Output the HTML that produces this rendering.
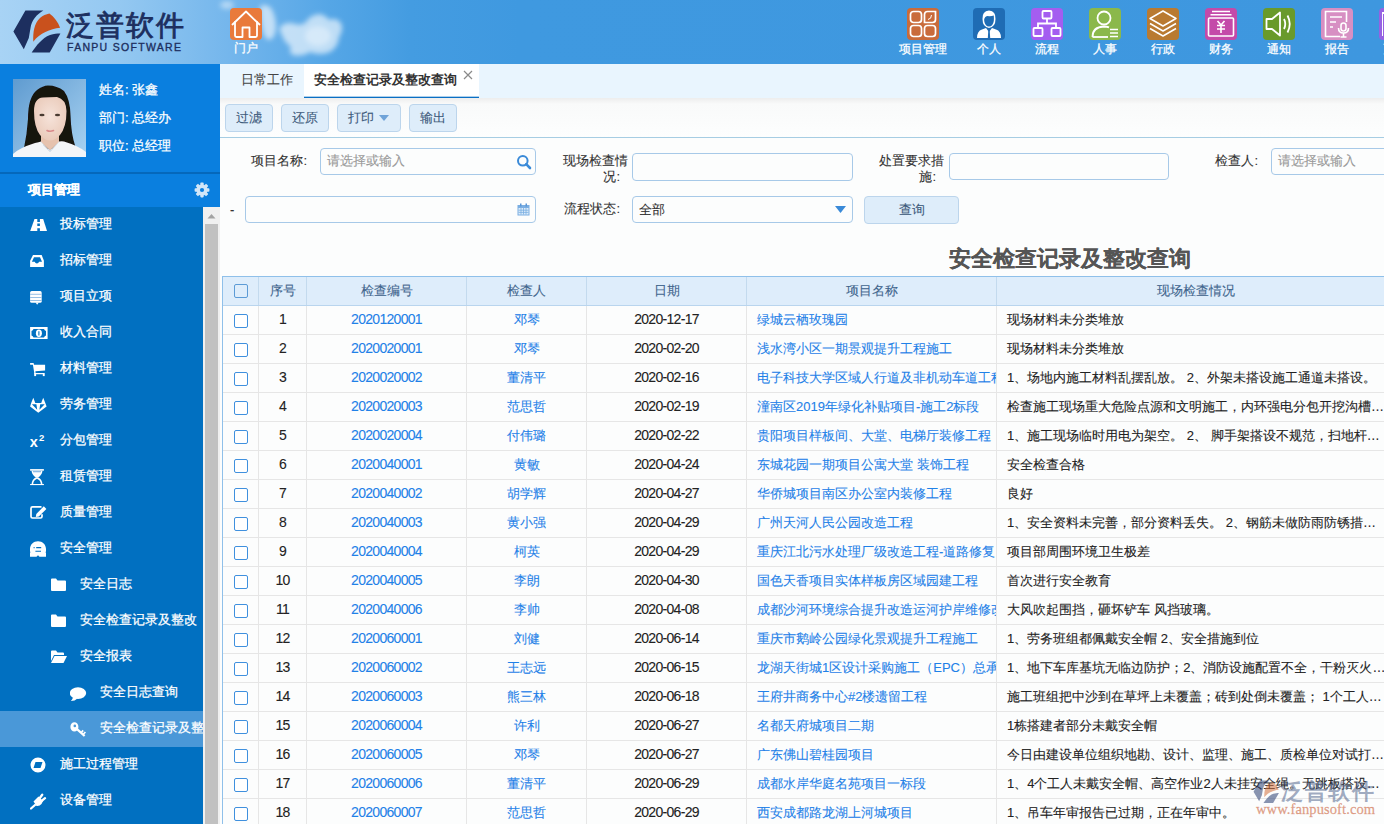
<!DOCTYPE html>
<html><head><meta charset="utf-8">
<style>
*{box-sizing:border-box}
html,body{margin:0;padding:0;width:1384px;height:824px;overflow:hidden;font-family:"Liberation Sans",sans-serif;font-size:13px;color:#333;background:#fff;-webkit-text-stroke-width:0.1px}
#header,#sidebar{-webkit-text-stroke-width:0.25px}
.abs{position:absolute}
#header{position:absolute;left:0;top:0;width:1384px;height:64px;background:linear-gradient(to right,#a8d3f5 0px,#94c8f1 120px,#74b6ec 230px,#55a6e6 330px,#449ce1 410px,#3f99e0 520px,#3e97df 1384px);overflow:hidden}
.hicon{position:absolute;top:8px;width:32px;height:32px;border-radius:4px}
.hicon svg{position:absolute;left:0;top:0}
.hlabel{position:absolute;top:41px;width:80px;text-align:center;color:#fff;font-size:12px;line-height:16px;white-space:nowrap;font-weight:500}
#sidebar{position:absolute;left:0;top:64px;width:220px;height:760px;background:#0170c1;overflow:hidden}
#main{position:absolute;left:220px;top:64px;width:1164px;height:760px;background:#fcfdfd;overflow:hidden}
.btn{background:#deedfa;border:1px solid #bcd5ec;border-radius:4px;text-align:center;line-height:26px;color:#3d5a7a;white-space:nowrap}
.lab{color:#333;text-align:right;white-space:nowrap}
.inp{background:transparent;border:1px solid #a7c9e8;border-radius:4px}
.ph{position:absolute;left:6px;top:4px;line-height:16px;color:#999;white-space:nowrap}
.th{height:28px;line-height:27px;text-align:center;color:#41658d;white-space:nowrap}
.td{height:28px;line-height:27px;text-align:center;color:#222;white-space:nowrap;overflow:hidden}
.td.lnk{color:#1f81e8}
.td.num{font-size:14px;letter-spacing:-0.7px}
.td.tl{text-align:left;padding-left:10px}
.td.ell{text-overflow:ellipsis}
.cb{width:14px;height:14px;border:1.5px solid #3f90de;border-radius:2px;background:#fff}
.cbh{border-color:#5c9bd6;background:transparent}
</style></head>
<body>
<div id="header">
  <svg class="abs" style="left:0;top:0" width="200" height="64" viewBox="0 0 200 64">
    <path d="M25.4,10.4 L43.4,10.4 C37,14 31.5,20 30.5,28 L28.8,38 L23.8,49.2 L13.4,31.6 Z" fill="#1d2f5f"/>
    <path d="M33.3,41.7 C33,32 34,24 40,18 C43,15.5 46,14.5 49.4,13.6 C54,17 58,22 60.1,27.8 C50,29 40,33 33.3,41.7 Z" fill="#c9511d"/>
    <path d="M31.7,52.4 C36,46 42,38 50,35 C54,33.8 57,33.5 60.4,33.5 L49.7,52.4 Z" fill="#1d2f5f"/>
  </svg>
  <div class="abs" style="left:66px;top:9px;font-size:28px;line-height:34px;color:#1d2f5f;letter-spacing:2px;-webkit-text-stroke:0.9px #1d2f5f;white-space:nowrap">泛普软件</div>
  <div class="abs" style="left:67px;top:41px;font-size:10.5px;line-height:12px;color:#1d2f5f;letter-spacing:1.3px;-webkit-text-stroke:0.35px #1d2f5f;white-space:nowrap">FANPU SOFTWARE</div>
  <!-- clouds -->
  <svg class="abs" style="left:200px;top:0" width="180" height="64" viewBox="0 0 180 64">
    <defs><filter id="bl" x="-50%" y="-50%" width="200%" height="200%"><feGaussianBlur stdDeviation="2.4"/></filter></defs>
    <g fill="#fff" filter="url(#bl)">
      <ellipse cx="27" cy="5" rx="7" ry="4" opacity=".45"/>
      <path d="M60,6 Q66,3 71,8 Q76,16 76,28 Q75,40 68,40 Q63,36 62,26 Q60,15 60,6 Z" opacity=".6"/>
      <path d="M80,27 Q86,21 95,24 Q102,26 106,22 Q110,15 119,14 Q126,15 129,20 Q136,17 141,23 Q144,30 139,37 Q139,46 130,52 Q120,56 110,52 Q102,57 93,55 Q88,52 91,47 Q84,42 82,35 Q79,31 80,27 Z" opacity=".62"/>
      <ellipse cx="118" cy="36" rx="13" ry="10" opacity=".35"/>
    </g>
  </svg>
  <div class="hicon" style="left:230px;background:#e97a3b">
    <svg width="32" height="32" viewBox="0 0 32 32" fill="none" stroke="#fff" stroke-width="1.8" stroke-linejoin="round" stroke-linecap="round">
      <path d="M2.5,16.5 L16,3.5 L29.5,16.5"/>
      <path d="M5,14 L5,27.5 Q5,29 6.5,29 L12.5,29 L12.5,19.5 L19.5,19.5 L19.5,29 L25.5,29 Q27,29 27,27.5 L27,14"/>
    </svg>
  </div>
  <div class="hlabel" style="left:206px;top:40px">门户</div>
  <!-- right icons -->
  <div class="hicon" style="left:907px;background:#c96b3b">
    <svg width="32" height="32" viewBox="0 0 32 32" fill="none" stroke="#fff" stroke-width="1.7">
      <rect x="3.5" y="3.5" width="11" height="11" rx="3"/>
      <path d="M17.5,6.5 Q17.5,3.5 20.5,3.5 L28.5,3.5 L28.5,11.5 Q28.5,14.5 25.5,14.5 L17.5,14.5 Z"/>
      <path d="M24.5,7 Q24.5,11 21,11.5" stroke-width="1"/>
      <rect x="3.5" y="17.5" width="11" height="11" rx="3"/>
      <rect x="17.5" y="17.5" width="11" height="11" rx="3"/>
    </svg>
  </div>
  <div class="hlabel" style="left:883px">项目管理</div>
  <div class="hicon" style="left:973px;background:#1f6cb4">
    <svg width="32" height="32" viewBox="0 0 32 32">
      <path d="M4,30 Q4,23 9,21.5 L13,20 L16,24 L19,20 L23,21.5 Q28,23 28,30 Z" fill="#fff"/>
      <path d="M15.3,22 L16.7,22 L17.2,30 L14.8,30 Z" fill="#1f6cb4"/>
      <path d="M9.5,11 Q9,3 16,2.5 Q23,3 22.5,11 Q22.5,19 16,20 Q9.5,19 9.5,11 Z" fill="#fff"/>
      <path d="M11.2,11 Q12,8.5 14,8 Q18,8.5 20.8,7.5 Q21,11 20.8,13 Q20,18.3 16,18.6 Q12,18.3 11.2,13 Z" fill="#1f6cb4"/>
    </svg>
  </div>
  <div class="hlabel" style="left:949px">个人</div>
  <div class="hicon" style="left:1031px;background:#a45df0">
    <svg width="32" height="32" viewBox="0 0 32 32" fill="none" stroke="#fff" stroke-width="1.8">
      <rect x="11.5" y="3" width="9" height="7.5" rx="1"/>
      <path d="M16,10.5 L16,15.5 M7,20 L7,15.5 L25,15.5 L25,20"/>
      <rect x="2.5" y="20" width="9" height="8" rx="1"/>
      <rect x="20.5" y="20" width="9" height="8" rx="1"/>
    </svg>
  </div>
  <div class="hlabel" style="left:1007px">流程</div>
  <div class="hicon" style="left:1089px;background:#8bb84b">
    <svg width="32" height="32" viewBox="0 0 32 32" fill="none" stroke="#fff" stroke-width="1.8">
      <circle cx="15" cy="10" r="6.5"/>
      <path d="M3.5,29 Q3.5,19 15,18.5 Q18,18.5 20,19.3"/>
      <path d="M3.5,29 L19,29"/>
      <path d="M21,21.5 L29,21.5 M21,25 L29,25 M21,28.5 L29,28.5" stroke-width="1.7"/>
    </svg>
  </div>
  <div class="hlabel" style="left:1065px">人事</div>
  <div class="hicon" style="left:1147px;background:#b97a31">
    <svg width="32" height="32" viewBox="0 0 32 32" fill="none" stroke="#fff" stroke-width="1.5" stroke-linejoin="round">
      <path d="M16,3 L29,10.5 L16,18 L3,10.5 Z"/>
      <path d="M3,15.5 L16,23 L29,15.5"/>
      <path d="M3,20.5 L16,28 L29,20.5"/>
    </svg>
  </div>
  <div class="hlabel" style="left:1123px">行政</div>
  <div class="hicon" style="left:1205px;background:#c44aa9">
    <svg width="32" height="32" viewBox="0 0 32 32" fill="none" stroke="#fff" stroke-width="1.6">
      <path d="M7,3.5 L25,3.5 M5.5,6.8 L26.5,6.8"/>
      <rect x="3.5" y="10" width="25" height="18" rx="1"/>
      <path d="M12.5,13 L16,17 L19.5,13 M16,17 L16,25 M12,17.5 L20,17.5 M12,21 L20,21"/>
    </svg>
  </div>
  <div class="hlabel" style="left:1181px">财务</div>
  <div class="hicon" style="left:1263px;background:#699a2b">
    <svg width="32" height="32" viewBox="0 0 32 32" fill="none" stroke="#fff" stroke-width="1.8" stroke-linejoin="round">
      <path d="M3.5,11 L9,11 L17,4.5 L17,27.5 L9,21 L3.5,21 Z"/>
      <path d="M21,11 Q23.5,16 21,21"/>
      <path d="M24.5,7.5 Q29,16 24.5,24.5"/>
    </svg>
  </div>
  <div class="hlabel" style="left:1239px">通知</div>
  <div class="hicon" style="left:1321px;background:#d78fc3">
    <svg width="32" height="32" viewBox="0 0 32 32" fill="none" stroke="#fff" stroke-width="1.6">
      <path d="M19,28.5 L4.5,28.5 L4.5,3.5 L25.5,3.5 L25.5,14"/>
      <path d="M9,9 L21,9 M9,14 L15,14 M9,19 L12,19"/>
      <rect x="20" y="15" width="5" height="8" rx="2.5"/>
      <path d="M17.5,20 Q17.5,25 22.5,25 Q27.5,25 27.5,20 M22.5,25 L22.5,29 M19.5,29 L25.5,29"/>
    </svg>
  </div>
  <div class="hlabel" style="left:1297px">报告</div>
  <div class="hicon" style="left:1379px;background:#9662e2"><div class="abs" style="left:2.5px;top:4px;width:1.7px;height:24px;background:#fff"></div><div class="abs" style="left:2.5px;top:4px;width:10px;height:1.7px;background:#fff"></div></div>
  <div class="hlabel" style="left:1355px">更多</div>
</div>
<div id="sidebar">
  <div class="abs" style="left:0;top:0;width:220px;height:108px;background:#0a7fdf"></div>
  <!-- photo -->
  <svg class="abs" style="left:13px;top:15px" width="73" height="78" viewBox="0 0 73 78">
    <defs>
      <linearGradient id="pbg" x1="0" y1="0" x2="1" y2="1"><stop offset="0" stop-color="#5f9bd0"/><stop offset="1" stop-color="#a9d3f2"/></linearGradient>
      <radialGradient id="face" cx="0.5" cy="0.45" r="0.6"><stop offset="0" stop-color="#f6e3da"/><stop offset="1" stop-color="#e9c9b8"/></radialGradient>
      <filter id="pb" x="-10%" y="-10%" width="120%" height="120%"><feGaussianBlur stdDeviation="0.5"/></filter>
    </defs>
    <rect width="73" height="78" fill="url(#pbg)"/>
    <g filter="url(#pb)">
    <path d="M11,69 Q14,55 15,40 Q15,18 24,11 Q30,6.5 35,6.5 Q44,6.5 51,12 Q57,20 57.5,36 Q58,55 62.5,68 Q50,70 36,70 Q22,70 11,69 Z" fill="#17120f"/>
    <path d="M28,52 L46,52 L46,63 L37,71.5 L28,63 Z" fill="#e6c2ae"/>
    <path d="M21,32 Q21,19 30,18.5 Q36,18 44,18 Q53,20 53.5,32 Q53.5,48 47,56 Q42,61.5 37,61.5 Q32,61.5 27,56 Q21,48 21,32 Z" fill="url(#face)"/>
    <path d="M0,78 L0,75 Q6,69 22,64 Q26,63 28,62.5 L37,72 L46,62.5 Q49,62 51,62.5 Q66,67 73,73 L73,78 Z" fill="#f3f5f8"/>
    <path d="M30,66 L37,73 L44,65" fill="none" stroke="#d5dbe2" stroke-width="0.8"/>
    <ellipse cx="29" cy="36" rx="2.6" ry="1.2" fill="#4a3a30"/>
    <ellipse cx="44.5" cy="36" rx="2.6" ry="1.2" fill="#4a3a30"/>
    <path d="M34,51.5 Q37,53 40.5,51.5" fill="none" stroke="#d9898b" stroke-width="1.6" stroke-linecap="round"/>
    </g>
  </svg>
  <div class="abs" style="left:99px;top:18px;color:#fff;font-size:13px;line-height:16px;white-space:nowrap">姓名: 张鑫</div>
  <div class="abs" style="left:99px;top:46px;color:#fff;font-size:13px;line-height:16px;white-space:nowrap">部门: 总经办</div>
  <div class="abs" style="left:99px;top:74px;color:#fff;font-size:13px;line-height:16px;white-space:nowrap">职位: 总经理</div>
  <div class="abs" style="left:0;top:108px;width:220px;height:2px;background:#0568bb"></div>
  <div class="abs" style="left:0;top:110px;width:220px;height:33px;background:#0a7fdf"></div>
  <div class="abs" style="left:28px;top:117px;color:#fff;font-size:13px;font-weight:bold;line-height:17px;white-space:nowrap">项目管理</div>
  <svg class="abs" style="left:194px;top:118px" width="16" height="16" viewBox="0 0 16 16"><g fill="#d2e6f8"><rect x="6.3" y="0.6" width="3.4" height="4" rx="0.8" transform="rotate(0 8 8)"/><rect x="6.3" y="0.6" width="3.4" height="4" rx="0.8" transform="rotate(45 8 8)"/><rect x="6.3" y="0.6" width="3.4" height="4" rx="0.8" transform="rotate(90 8 8)"/><rect x="6.3" y="0.6" width="3.4" height="4" rx="0.8" transform="rotate(135 8 8)"/><rect x="6.3" y="0.6" width="3.4" height="4" rx="0.8" transform="rotate(180 8 8)"/><rect x="6.3" y="0.6" width="3.4" height="4" rx="0.8" transform="rotate(225 8 8)"/><rect x="6.3" y="0.6" width="3.4" height="4" rx="0.8" transform="rotate(270 8 8)"/><rect x="6.3" y="0.6" width="3.4" height="4" rx="0.8" transform="rotate(315 8 8)"/><circle cx="8" cy="8" r="5.6"/></g><circle cx="8" cy="8" r="2.1" fill="#0a7fdf"/></svg>
  <!-- menu -->
  <div class="abs" style="left:0;top:143px;width:220px;height:617px;background:#0170c1"></div>
  <div class="abs" style="left:0;top:647px;width:203px;height:36px;background:#4a98d8"></div>
  <div class="abs" style="left:60px;top:142px;line-height:36px;color:#fff;font-size:13px;white-space:nowrap">投标管理</div>
  <svg class="abs" style="left:30px;top:153px" width="18" height="17" viewBox="0 0 18 17"><path d="M4.5,2.1 L13.2,2.1 L17,14 L0.2,14 Z" fill="#fff"/><path d="M7.3,2.1 L9.9,2.1 L9.9,5 L7.3,5 Z M7.3,6.6 L9.9,6.6 L9.9,9 L7.3,9 Z M7.3,11.2 L9.9,11.2 L9.9,14 L7.3,14 Z" fill="#0170c1"/></svg>
  <div class="abs" style="left:60px;top:178px;line-height:36px;color:#fff;font-size:13px;white-space:nowrap">招标管理</div>
  <svg class="abs" style="left:30px;top:189px" width="18" height="17" viewBox="0 0 18 17"><path d="M3,2.1 L11.7,2.1 L13.9,7.8 L13.9,14 L0.1,14 L0.1,7.8 Z" fill="#fff"/><path d="M4,4.2 L10,4.2 L12,8.7 L9.1,8.7 Q8.5,10.5 6.9,10.5 Q5.3,10.5 4.7,8.7 L1.9,8.7 Z" fill="#0170c1"/></svg>
  <div class="abs" style="left:60px;top:214px;line-height:36px;color:#fff;font-size:13px;white-space:nowrap">项目立项</div>
  <svg class="abs" style="left:30px;top:225px" width="18" height="17" viewBox="0 0 18 17"><rect x="0.1" y="2.1" width="11.6" height="11.7" rx="1.6" fill="#fff"/><path d="M5.6,13.5 L7.1,15.8 L8.8,13.5 Z" fill="#fff"/><path d="M0.1,5.3 L11.7,5.3 M0.1,8.5 L11.7,8.5 M0.1,11.5 L11.7,11.5" stroke="#8db9e2" stroke-width="0.9"/></svg>
  <div class="abs" style="left:60px;top:250px;line-height:36px;color:#fff;font-size:13px;white-space:nowrap">收入合同</div>
  <svg class="abs" style="left:30px;top:261px" width="18" height="17" viewBox="0 0 18 17"><rect x="0.1" y="2" width="17.5" height="12" fill="#fff"/><path d="M3.5,4 L14,4 Q14.5,5.6 16,6 L16,10.5 Q14.5,11 14,12.5 L3.5,12.5 Q3,11 1.5,10.5 L1.5,6 Q3,5.6 3.5,4 Z" fill="#0170c1"/><ellipse cx="8.9" cy="8.3" rx="3" ry="3.7" fill="#fff"/><path d="M8.9,6.3 L8.9,10.5" stroke="#0170c1" stroke-width="1.1"/></svg>
  <div class="abs" style="left:60px;top:286px;line-height:36px;color:#fff;font-size:13px;white-space:nowrap">材料管理</div>
  <svg class="abs" style="left:30px;top:297px" width="18" height="17" viewBox="0 0 18 17"><path d="M0.1,2.1 L3.6,2.1 L4,3.7 L15.1,3.7 L15.1,9.6 L5.4,10.3 L5.6,11.9 L13.8,11.9 L13.8,13.2 L4.5,13.2 L2.9,3.7 L0.1,3.7 Z" fill="#fff"/><rect x="4.2" y="12" width="1.9" height="3.1" fill="#fff"/><rect x="12.8" y="12" width="1.9" height="3.1" fill="#fff"/></svg>
  <div class="abs" style="left:60px;top:322px;line-height:36px;color:#fff;font-size:13px;white-space:nowrap">劳务管理</div>
  <svg class="abs" style="left:30px;top:333px" width="18" height="17" viewBox="0 0 18 17"><path d="M3.3,0.8 L5.3,6.1 L11.2,6.1 L13.2,0.8 L15.3,6.1 L16.6,9.6 L8.3,15.8 L0.1,9.6 L1.2,6.1 Z" fill="#fff"/><path d="M1.9,7.2 L6.4,7.2 L7.2,12.8 Z M10.2,7.2 L14.7,7.2 L9.4,12.8 Z" fill="#0170c1"/></svg>
  <div class="abs" style="left:60px;top:358px;line-height:36px;color:#fff;font-size:13px;white-space:nowrap">分包管理</div>
  <svg class="abs" style="left:30px;top:369px" width="18" height="17" viewBox="0 0 18 17"><text x="-0.2" y="13.8" font-family="Liberation Sans" font-weight="bold" font-size="14.5" fill="#fff">x</text><text x="8.9" y="8.1" font-family="Liberation Sans" font-weight="bold" font-size="9.5" fill="#fff">2</text></svg>
  <div class="abs" style="left:60px;top:394px;line-height:36px;color:#fff;font-size:13px;white-space:nowrap">租赁管理</div>
  <svg class="abs" style="left:30px;top:405px" width="18" height="17" viewBox="0 0 18 17"><rect x="0.1" y="0.1" width="13.8" height="1.6" fill="#fff"/><rect x="0.1" y="15" width="13.8" height="1.1" fill="#fff"/><path d="M1.5,1.7 L12.5,1.7 Q12,6 8,8.4 L6,8.4 Q2,6 1.5,1.7 Z" fill="#fff"/><rect x="3" y="2" width="8" height="1.3" fill="#8fbce6"/><path d="M6,8.2 Q1.8,10.5 1.6,15 L12.4,15 Q12.2,10.5 8,8.2 Z" fill="#fff"/><path d="M7,9.7 Q3.4,11.2 3.2,15 L10.8,15 Q10.6,11.2 7,9.7 Z" fill="#0170c1"/></svg>
  <div class="abs" style="left:60px;top:430px;line-height:36px;color:#fff;font-size:13px;white-space:nowrap">质量管理</div>
  <svg class="abs" style="left:30px;top:441px" width="18" height="17" viewBox="0 0 18 17"><path d="M11.5,1.9 L2.5,1.9 Q1,1.9 1,3.5 L1,11.5 Q1,13 2.5,13 L10.5,13 Q12,13 12,11.5 L12,9.3" fill="none" stroke="#fff" stroke-width="1.7"/><path d="M5.8,12 L6.3,9 L13.8,1.3 L16.4,3.9 L8.8,11.5 Z" fill="#fff"/></svg>
  <div class="abs" style="left:60px;top:466px;line-height:36px;color:#fff;font-size:13px;white-space:nowrap">安全管理</div>
  <svg class="abs" style="left:30px;top:477px" width="18" height="17" viewBox="0 0 18 17"><path d="M8,0.2 C12.5,0.2 16,3.5 16,8 L16,10.3 Q15.2,11.2 16,12 L16,15.8 L9.5,15.8 L8,14.2 L6.5,15.8 L0,15.8 L0,12 Q0.8,11.2 0,10.3 L0,8 C0,3.5 3.5,0.2 8,0.2 Z" fill="#fff"/><path d="M3.6,6.1 L4.6,6.1 L4.6,7.3 L3.6,7.3 Z M6.2,6.1 L11.2,6.1 L11.2,7.3 L6.2,7.3 Z M5.4,9.8 L11,9.8 L11,10.8 L5.4,10.8 Z" fill="#0170c1"/></svg>
  <div class="abs" style="left:80px;top:502px;line-height:36px;color:#fff;font-size:13px;white-space:nowrap">安全日志</div>
  <svg class="abs" style="left:50px;top:513px" width="18" height="17" viewBox="0 0 18 17"><path d="M1,2.5 Q1,1.5 2,1.5 L6,1.5 L7.5,3.5 L15,3.5 Q16,3.5 16,4.5 L16,13 Q16,14 15,14 L2,14 Q1,14 1,13 Z" fill="#fff"/></svg>
  <div class="abs" style="left:80px;top:538px;line-height:36px;color:#fff;font-size:13px;white-space:nowrap">安全检查记录及整改</div>
  <svg class="abs" style="left:50px;top:549px" width="18" height="17" viewBox="0 0 18 17"><path d="M1,2.5 Q1,1.5 2,1.5 L6,1.5 L7.5,3.5 L15,3.5 Q16,3.5 16,4.5 L16,13 Q16,14 15,14 L2,14 Q1,14 1,13 Z" fill="#fff"/></svg>
  <div class="abs" style="left:80px;top:574px;line-height:36px;color:#fff;font-size:13px;white-space:nowrap">安全报表</div>
  <svg class="abs" style="left:50px;top:585px" width="18" height="17" viewBox="0 0 18 17"><path d="M1,2.5 Q1,1.5 2,1.5 L6,1.5 L7.5,3.5 L13,3.5 Q14,3.5 14,4.5 L14,6 L4,6 L1,12 Z" fill="#fff"/><path d="M4.5,7 L17,7 L13.5,14 L1,14 Z" fill="#fff"/></svg>
  <div class="abs" style="left:100px;top:610px;line-height:36px;color:#fff;font-size:13px;white-space:nowrap">安全日志查询</div>
  <svg class="abs" style="left:70px;top:621px" width="18" height="17" viewBox="0 0 18 17"><ellipse cx="8" cy="8.1" rx="8.2" ry="5.8" fill="#fff"/><path d="M3,12 Q2.6,14.8 0.9,16.1 Q5,16 7.5,13.5 Z" fill="#fff"/></svg>
  <div class="abs" style="left:100px;top:646px;line-height:36px;color:#fff;font-size:13px;white-space:nowrap">安全检查记录及整改查询</div>
  <svg class="abs" style="left:70px;top:657px" width="18" height="17" viewBox="0 0 18 17"><path d="M4.2,1.2 A4,4.7 0 1 1 4.2,10.6 A4,4.7 0 1 1 4.2,1.2 Z M4.6,3.6 A1.3,1.3 0 1 0 4.6,6.2 A1.3,1.3 0 1 0 4.6,3.6 Z" fill="#fff" fill-rule="evenodd" transform="translate(0.2,0)"/><path d="M7,8.2 L14.6,15" stroke="#fff" stroke-width="2.3"/><path d="M11.3,11.5 L13.2,9.4 M13.3,13.3 L15.4,11" stroke="#fff" stroke-width="1.7"/></svg>
  <div class="abs" style="left:60px;top:682px;line-height:36px;color:#fff;font-size:13px;white-space:nowrap">施工过程管理</div>
  <svg class="abs" style="left:30px;top:693px" width="18" height="17" viewBox="0 0 18 17"><path d="M8,0.5 A7.5,7.5 0 1 1 8,15.5 A7.5,7.5 0 1 1 8,0.5 Z M5.5,5 L12.5,5 L10.5,11 L3.5,11 Z" fill="#fff" fill-rule="evenodd"/></svg>
  <div class="abs" style="left:60px;top:718px;line-height:36px;color:#fff;font-size:13px;white-space:nowrap">设备管理</div>
  <svg class="abs" style="left:30px;top:729px" width="18" height="17" viewBox="0 0 18 17"><path d="M3.5,8.5 L8.5,3.5 L13,8 L11.5,11 Q9.5,13.5 6.5,13 Z" fill="#fff"/><path d="M9.5,5.5 L12.2,1.8 M11.5,8 L15,5.2 M5,12 L1,15.5" stroke="#fff" stroke-width="2.3" stroke-linecap="round"/></svg>
  <div class="abs" style="left:203px;top:143px;width:17px;height:617px;background:#f0f0f0"></div>
  <svg class="abs" style="left:203px;top:145px" width="17" height="14" viewBox="0 0 17 14"><path d="M4.5,9.5 L8.5,5 L12.5,9.5 Z" fill="#a3a3a3"/></svg>
  <div class="abs" style="left:205px;top:160px;width:13px;height:620px;background:#c1c1c1"></div>
</div>
<div id="main">
  <div class="abs" style="left:0;top:0;width:1164px;height:34px;background:#e9f5fe"></div>
  <div class="abs" style="left:21px;top:-1px;line-height:33px;color:#444;white-space:nowrap">日常工作</div>
  <div class="abs" style="left:84px;top:0;width:175px;height:34px;background:#fff;border-bottom:1px solid #0a6fc4;box-shadow:0 -0.6px 0 #5d9fd8 inset"></div>
  <div class="abs" style="left:94px;top:-1px;line-height:33px;color:#333;font-weight:bold;-webkit-text-stroke-width:0;white-space:nowrap">安全检查记录及整改查询</div>
  <svg class="abs" style="left:243px;top:6px" width="10" height="10" viewBox="0 0 10 10"><path d="M1,1 L9,9 M9,1 L1,9" stroke="#8a8a8a" stroke-width="1.2"/></svg>
  <div class="abs" style="left:0;top:34px;width:1164px;height:40px;background:linear-gradient(to bottom,#ededed 0px,#f9fafa 6px,#fdfefe 40px);border-bottom:1px solid #a6cde3"></div>
  <div class="abs btn" style="left:5px;top:40px;width:48px;height:27.5px;">过滤</div>
  <div class="abs btn" style="left:61px;top:40px;width:48px;height:27.5px;">还原</div>
  <div class="abs btn" style="left:117px;top:40px;width:64px;height:27.5px;padding-right:16px;">打印</div>
  <div class="abs btn" style="left:189px;top:40px;width:48px;height:27.5px;">输出</div>
  <svg class="abs" style="left:159px;top:51px" width="10" height="6" viewBox="0 0 10 6"><path d="M0,0 L10,0 L5,6 Z" fill="#6fa3d8"/></svg>
  <div class="abs lab" style="right:1069px;top:89px;line-height:16px">项目名称<span style="margin-right:8px">:</span></div>
  <div class="abs inp" style="left:100px;top:84px;width:216px;height:27px"><span class="ph">请选择或输入</span></div>
  <svg class="abs" style="left:296px;top:90px" width="16" height="16" viewBox="0 0 16 16"><circle cx="6.8" cy="6.8" r="4.8" fill="none" stroke="#3a8ad8" stroke-width="2"/><path d="M10.2,10.2 L14,14" stroke="#3a8ad8" stroke-width="2.6" stroke-linecap="round"/></svg>
  <div class="abs lab" style="right:756px;top:89px;line-height:16px">现场检查情<br>况<span style="margin-right:8px">:</span></div>
  <div class="abs inp" style="left:412px;top:89px;width:221px;height:28px"></div>
  <div class="abs lab" style="right:440px;top:89px;line-height:16px">处置要求措<br>施<span style="margin-right:8px">:</span></div>
  <div class="abs inp" style="left:729px;top:89px;width:220px;height:27px"></div>
  <div class="abs lab" style="right:118px;top:89px;line-height:16px">检查人<span style="margin-right:8px">:</span></div>
  <div class="abs inp" style="left:1051px;top:84px;width:200px;height:27px"><span class="ph">请选择或输入</span></div>
  <div class="abs" style="left:10px;top:138px;line-height:16px;color:#333">-</div>
  <div class="abs inp" style="left:25px;top:132px;width:291px;height:27px"></div>
  <svg class="abs" style="left:297px;top:139px" width="13" height="13" viewBox="0 0 13 13"><rect x="0.5" y="2" width="12" height="10.5" fill="#7aaee2"/><rect x="1.5" y="5" width="10" height="6.5" fill="#dcebf9"/><path d="M1.5,7.2 L11.5,7.2 M1.5,9.4 L11.5,9.4 M4,5 L4,11.5 M6.5,5 L6.5,11.5 M9,5 L9,11.5" stroke="#7aaee2" stroke-width="0.8"/><rect x="3" y="0.5" width="1.5" height="3" fill="#5a96d6"/><rect x="8.5" y="0.5" width="1.5" height="3" fill="#5a96d6"/></svg>
  <div class="abs lab" style="right:756px;top:137px;line-height:16px">流程状态<span style="margin-right:8px">:</span></div>
  <div class="abs inp" style="left:412px;top:132px;width:221px;height:27px"><span style="position:absolute;left:6px;top:5px;line-height:16px;color:#333">全部</span></div>
  <svg class="abs" style="left:615px;top:142px" width="11" height="7" viewBox="0 0 11 7"><path d="M0,0 L11,0 L5.5,7 Z" fill="#3a8ad8"/></svg>
  <div class="abs btn" style="left:644px;top:132px;width:95px;height:28px">查询</div>
  <div class="abs" style="left:729px;top:180px;font-size:22px;line-height:30px;font-weight:bold;color:#555;white-space:nowrap">安全检查记录及整改查询</div>
  <div class="abs" style="left:2px;top:212px;width:1170px;height:30px;background:#deedfb;border-top:1px solid #8fc0ea;border-bottom:1px solid #b9d5ee"></div>
  <div class="abs" style="left:2px;top:212px;width:1px;height:600px;background:#8fc0ea"></div>
  <div class="abs" style="left:38px;top:213px;width:1px;height:28px;background:#c3daee"></div>
  <div class="abs" style="left:38px;top:242px;width:1px;height:560px;background:#e6e6e6"></div>
  <div class="abs th" style="left:39px;top:213px;width:47px">序号</div>
  <div class="abs" style="left:86px;top:213px;width:1px;height:28px;background:#c3daee"></div>
  <div class="abs" style="left:86px;top:242px;width:1px;height:560px;background:#e6e6e6"></div>
  <div class="abs th" style="left:87px;top:213px;width:159px">检查编号</div>
  <div class="abs" style="left:246px;top:213px;width:1px;height:28px;background:#c3daee"></div>
  <div class="abs" style="left:246px;top:242px;width:1px;height:560px;background:#e6e6e6"></div>
  <div class="abs th" style="left:247px;top:213px;width:119px">检查人</div>
  <div class="abs" style="left:366px;top:213px;width:1px;height:28px;background:#c3daee"></div>
  <div class="abs" style="left:366px;top:242px;width:1px;height:560px;background:#e6e6e6"></div>
  <div class="abs th" style="left:367px;top:213px;width:159px">日期</div>
  <div class="abs" style="left:526px;top:213px;width:1px;height:28px;background:#c3daee"></div>
  <div class="abs" style="left:526px;top:242px;width:1px;height:560px;background:#e6e6e6"></div>
  <div class="abs th" style="left:527px;top:213px;width:249px">项目名称</div>
  <div class="abs" style="left:776px;top:213px;width:1px;height:28px;background:#c3daee"></div>
  <div class="abs" style="left:776px;top:242px;width:1px;height:560px;background:#e6e6e6"></div>
  <div class="abs th" style="left:777px;top:213px;width:397px">现场检查情况</div>
  <div class="abs cb cbh" style="left:14px;top:220px"></div>
  <div class="abs" style="left:3px;top:270px;width:1170px;height:1px;background:#e6e6e6"></div>
  <div class="abs cb" style="left:14px;top:249.5px"></div>
  <div class="abs td num" style="left:39px;top:242px;width:47px">1</div>
  <div class="abs td lnk num" style="left:87px;top:242px;width:159px">2020120001</div>
  <div class="abs td lnk" style="left:247px;top:242px;width:119px">邓琴</div>
  <div class="abs td num" style="left:367px;top:242px;width:159px">2020-12-17</div>
  <div class="abs td lnk tl" style="left:527px;top:242px;width:249px">绿城云栖玫瑰园</div>
  <div class="abs td tl ell" style="left:777px;top:242px;width:389px">现场材料未分类堆放</div>
  <div class="abs" style="left:3px;top:299px;width:1170px;height:1px;background:#e6e6e6"></div>
  <div class="abs cb" style="left:14px;top:278.5px"></div>
  <div class="abs td num" style="left:39px;top:271px;width:47px">2</div>
  <div class="abs td lnk num" style="left:87px;top:271px;width:159px">2020020001</div>
  <div class="abs td lnk" style="left:247px;top:271px;width:119px">邓琴</div>
  <div class="abs td num" style="left:367px;top:271px;width:159px">2020-02-20</div>
  <div class="abs td lnk tl" style="left:527px;top:271px;width:249px">浅水湾小区一期景观提升工程施工</div>
  <div class="abs td tl ell" style="left:777px;top:271px;width:389px">现场材料未分类堆放</div>
  <div class="abs" style="left:3px;top:328px;width:1170px;height:1px;background:#e6e6e6"></div>
  <div class="abs cb" style="left:14px;top:307.5px"></div>
  <div class="abs td num" style="left:39px;top:300px;width:47px">3</div>
  <div class="abs td lnk num" style="left:87px;top:300px;width:159px">2020020002</div>
  <div class="abs td lnk" style="left:247px;top:300px;width:119px">董清平</div>
  <div class="abs td num" style="left:367px;top:300px;width:159px">2020-02-16</div>
  <div class="abs td lnk tl" style="left:527px;top:300px;width:249px">电子科技大学区域人行道及非机动车道工程</div>
  <div class="abs td tl ell" style="left:777px;top:300px;width:389px">1、场地内施工材料乱摆乱放。 2、外架未搭设施工通道未搭设。</div>
  <div class="abs" style="left:3px;top:357px;width:1170px;height:1px;background:#e6e6e6"></div>
  <div class="abs cb" style="left:14px;top:336.5px"></div>
  <div class="abs td num" style="left:39px;top:329px;width:47px">4</div>
  <div class="abs td lnk num" style="left:87px;top:329px;width:159px">2020020003</div>
  <div class="abs td lnk" style="left:247px;top:329px;width:119px">范思哲</div>
  <div class="abs td num" style="left:367px;top:329px;width:159px">2020-02-19</div>
  <div class="abs td lnk tl" style="left:527px;top:329px;width:249px">潼南区2019年绿化补贴项目-施工2标段</div>
  <div class="abs td tl ell" style="left:777px;top:329px;width:389px">检查施工现场重大危险点源和文明施工，内环强电分包开挖沟槽没有设置防护</div>
  <div class="abs" style="left:3px;top:386px;width:1170px;height:1px;background:#e6e6e6"></div>
  <div class="abs cb" style="left:14px;top:365.5px"></div>
  <div class="abs td num" style="left:39px;top:358px;width:47px">5</div>
  <div class="abs td lnk num" style="left:87px;top:358px;width:159px">2020020004</div>
  <div class="abs td lnk" style="left:247px;top:358px;width:119px">付伟璐</div>
  <div class="abs td num" style="left:367px;top:358px;width:159px">2020-02-22</div>
  <div class="abs td lnk tl" style="left:527px;top:358px;width:249px">贵阳项目样板间、大堂、电梯厅装修工程</div>
  <div class="abs td tl ell" style="left:777px;top:358px;width:389px">1、施工现场临时用电为架空。 2、 脚手架搭设不规范，扫地杆未设置</div>
  <div class="abs" style="left:3px;top:415px;width:1170px;height:1px;background:#e6e6e6"></div>
  <div class="abs cb" style="left:14px;top:394.5px"></div>
  <div class="abs td num" style="left:39px;top:387px;width:47px">6</div>
  <div class="abs td lnk num" style="left:87px;top:387px;width:159px">2020040001</div>
  <div class="abs td lnk" style="left:247px;top:387px;width:119px">黄敏</div>
  <div class="abs td num" style="left:367px;top:387px;width:159px">2020-04-24</div>
  <div class="abs td lnk tl" style="left:527px;top:387px;width:249px">东城花园一期项目公寓大堂 装饰工程</div>
  <div class="abs td tl ell" style="left:777px;top:387px;width:389px">安全检查合格</div>
  <div class="abs" style="left:3px;top:444px;width:1170px;height:1px;background:#e6e6e6"></div>
  <div class="abs cb" style="left:14px;top:423.5px"></div>
  <div class="abs td num" style="left:39px;top:416px;width:47px">7</div>
  <div class="abs td lnk num" style="left:87px;top:416px;width:159px">2020040002</div>
  <div class="abs td lnk" style="left:247px;top:416px;width:119px">胡学辉</div>
  <div class="abs td num" style="left:367px;top:416px;width:159px">2020-04-27</div>
  <div class="abs td lnk tl" style="left:527px;top:416px;width:249px">华侨城项目南区办公室内装修工程</div>
  <div class="abs td tl ell" style="left:777px;top:416px;width:389px">良好</div>
  <div class="abs" style="left:3px;top:473px;width:1170px;height:1px;background:#e6e6e6"></div>
  <div class="abs cb" style="left:14px;top:452.5px"></div>
  <div class="abs td num" style="left:39px;top:445px;width:47px">8</div>
  <div class="abs td lnk num" style="left:87px;top:445px;width:159px">2020040003</div>
  <div class="abs td lnk" style="left:247px;top:445px;width:119px">黄小强</div>
  <div class="abs td num" style="left:367px;top:445px;width:159px">2020-04-29</div>
  <div class="abs td lnk tl" style="left:527px;top:445px;width:249px">广州天河人民公园改造工程</div>
  <div class="abs td tl ell" style="left:777px;top:445px;width:389px">1、安全资料未完善，部分资料丢失。 2、钢筋未做防雨防锈措施。</div>
  <div class="abs" style="left:3px;top:502px;width:1170px;height:1px;background:#e6e6e6"></div>
  <div class="abs cb" style="left:14px;top:481.5px"></div>
  <div class="abs td num" style="left:39px;top:474px;width:47px">9</div>
  <div class="abs td lnk num" style="left:87px;top:474px;width:159px">2020040004</div>
  <div class="abs td lnk" style="left:247px;top:474px;width:119px">柯英</div>
  <div class="abs td num" style="left:367px;top:474px;width:159px">2020-04-29</div>
  <div class="abs td lnk tl" style="left:527px;top:474px;width:249px">重庆江北污水处理厂级改造工程-道路修复</div>
  <div class="abs td tl ell" style="left:777px;top:474px;width:389px">项目部周围环境卫生极差</div>
  <div class="abs" style="left:3px;top:531px;width:1170px;height:1px;background:#e6e6e6"></div>
  <div class="abs cb" style="left:14px;top:510.5px"></div>
  <div class="abs td num" style="left:39px;top:503px;width:47px">10</div>
  <div class="abs td lnk num" style="left:87px;top:503px;width:159px">2020040005</div>
  <div class="abs td lnk" style="left:247px;top:503px;width:119px">李朗</div>
  <div class="abs td num" style="left:367px;top:503px;width:159px">2020-04-30</div>
  <div class="abs td lnk tl" style="left:527px;top:503px;width:249px">国色天香项目实体样板房区域园建工程</div>
  <div class="abs td tl ell" style="left:777px;top:503px;width:389px">首次进行安全教育</div>
  <div class="abs" style="left:3px;top:560px;width:1170px;height:1px;background:#e6e6e6"></div>
  <div class="abs cb" style="left:14px;top:539.5px"></div>
  <div class="abs td num" style="left:39px;top:532px;width:47px">11</div>
  <div class="abs td lnk num" style="left:87px;top:532px;width:159px">2020040006</div>
  <div class="abs td lnk" style="left:247px;top:532px;width:119px">李帅</div>
  <div class="abs td num" style="left:367px;top:532px;width:159px">2020-04-08</div>
  <div class="abs td lnk tl" style="left:527px;top:532px;width:249px">成都沙河环境综合提升改造运河护岸维修改造</div>
  <div class="abs td tl ell" style="left:777px;top:532px;width:389px">大风吹起围挡，砸坏铲车 风挡玻璃。</div>
  <div class="abs" style="left:3px;top:589px;width:1170px;height:1px;background:#e6e6e6"></div>
  <div class="abs cb" style="left:14px;top:568.5px"></div>
  <div class="abs td num" style="left:39px;top:561px;width:47px">12</div>
  <div class="abs td lnk num" style="left:87px;top:561px;width:159px">2020060001</div>
  <div class="abs td lnk" style="left:247px;top:561px;width:119px">刘健</div>
  <div class="abs td num" style="left:367px;top:561px;width:159px">2020-06-14</div>
  <div class="abs td lnk tl" style="left:527px;top:561px;width:249px">重庆市鹅岭公园绿化景观提升工程施工</div>
  <div class="abs td tl ell" style="left:777px;top:561px;width:389px">1、劳务班组都佩戴安全帽 2、安全措施到位</div>
  <div class="abs" style="left:3px;top:618px;width:1170px;height:1px;background:#e6e6e6"></div>
  <div class="abs cb" style="left:14px;top:597.5px"></div>
  <div class="abs td num" style="left:39px;top:590px;width:47px">13</div>
  <div class="abs td lnk num" style="left:87px;top:590px;width:159px">2020060002</div>
  <div class="abs td lnk" style="left:247px;top:590px;width:119px">王志远</div>
  <div class="abs td num" style="left:367px;top:590px;width:159px">2020-06-15</div>
  <div class="abs td lnk tl" style="left:527px;top:590px;width:249px">龙湖天街城1区设计采购施工（EPC）总承包</div>
  <div class="abs td tl ell" style="left:777px;top:590px;width:389px">1、地下车库基坑无临边防护；2、消防设施配置不全，干粉灭火器过期</div>
  <div class="abs" style="left:3px;top:647px;width:1170px;height:1px;background:#e6e6e6"></div>
  <div class="abs cb" style="left:14px;top:626.5px"></div>
  <div class="abs td num" style="left:39px;top:619px;width:47px">14</div>
  <div class="abs td lnk num" style="left:87px;top:619px;width:159px">2020060003</div>
  <div class="abs td lnk" style="left:247px;top:619px;width:119px">熊三林</div>
  <div class="abs td num" style="left:367px;top:619px;width:159px">2020-06-18</div>
  <div class="abs td lnk tl" style="left:527px;top:619px;width:249px">王府井商务中心#2楼遗留工程</div>
  <div class="abs td tl ell" style="left:777px;top:619px;width:389px">施工班组把中沙到在草坪上未覆盖；砖到处倒未覆盖； 1个工人未戴安全帽</div>
  <div class="abs" style="left:3px;top:676px;width:1170px;height:1px;background:#e6e6e6"></div>
  <div class="abs cb" style="left:14px;top:655.5px"></div>
  <div class="abs td num" style="left:39px;top:648px;width:47px">15</div>
  <div class="abs td lnk num" style="left:87px;top:648px;width:159px">2020060004</div>
  <div class="abs td lnk" style="left:247px;top:648px;width:119px">许利</div>
  <div class="abs td num" style="left:367px;top:648px;width:159px">2020-06-27</div>
  <div class="abs td lnk tl" style="left:527px;top:648px;width:249px">名都天府城项目二期</div>
  <div class="abs td tl ell" style="left:777px;top:648px;width:389px">1栋搭建者部分未戴安全帽</div>
  <div class="abs" style="left:3px;top:705px;width:1170px;height:1px;background:#e6e6e6"></div>
  <div class="abs cb" style="left:14px;top:684.5px"></div>
  <div class="abs td num" style="left:39px;top:677px;width:47px">16</div>
  <div class="abs td lnk num" style="left:87px;top:677px;width:159px">2020060005</div>
  <div class="abs td lnk" style="left:247px;top:677px;width:119px">邓琴</div>
  <div class="abs td num" style="left:367px;top:677px;width:159px">2020-06-27</div>
  <div class="abs td lnk tl" style="left:527px;top:677px;width:249px">广东佛山碧桂园项目</div>
  <div class="abs td tl ell" style="left:777px;top:677px;width:389px">今日由建设单位组织地勘、设计、监理、施工、质检单位对试打桩进行验收</div>
  <div class="abs" style="left:3px;top:734px;width:1170px;height:1px;background:#e6e6e6"></div>
  <div class="abs cb" style="left:14px;top:713.5px"></div>
  <div class="abs td num" style="left:39px;top:706px;width:47px">17</div>
  <div class="abs td lnk num" style="left:87px;top:706px;width:159px">2020060006</div>
  <div class="abs td lnk" style="left:247px;top:706px;width:119px">董清平</div>
  <div class="abs td num" style="left:367px;top:706px;width:159px">2020-06-29</div>
  <div class="abs td lnk tl" style="left:527px;top:706px;width:249px">成都水岸华庭名苑项目一标段</div>
  <div class="abs td tl ell" style="left:777px;top:706px;width:389px">1、4个工人未戴安全帽、高空作业2人未挂安全绳。无跳板搭设不规范</div>
  <div class="abs" style="left:3px;top:763px;width:1170px;height:1px;background:#e6e6e6"></div>
  <div class="abs cb" style="left:14px;top:742.5px"></div>
  <div class="abs td num" style="left:39px;top:735px;width:47px">18</div>
  <div class="abs td lnk num" style="left:87px;top:735px;width:159px">2020060007</div>
  <div class="abs td lnk" style="left:247px;top:735px;width:119px">范思哲</div>
  <div class="abs td num" style="left:367px;top:735px;width:159px">2020-06-29</div>
  <div class="abs td lnk tl" style="left:527px;top:735px;width:249px">西安成都路龙湖上河城项目</div>
  <div class="abs td tl ell" style="left:777px;top:735px;width:389px">1、吊车年审报告已过期，正在年审中。</div>
  <svg class="abs" style="left:1030px;top:712px" width="60" height="44" viewBox="0 0 60 44"><g transform="translate(-3.7,-1.2) scale(0.54)" opacity="0.55"><path d="M25.4,10.4 L43.4,10.4 C37,14 31.5,20 30.5,28 L28.8,38 L23.8,49.2 L13.4,31.6 Z" fill="#2b3f73"/><path d="M33.3,41.7 C33,32 34,24 40,18 C43,15.5 46,14.5 49.4,13.6 C54,17 58,22 60.1,27.8 C50,29 40,33 33.3,41.7 Z" fill="#d4703c"/><path d="M31.7,52.4 C36,46 42,38 50,35 C54,33.8 57,33.5 60.4,33.5 L49.7,52.4 Z" fill="#2b3f73"/></g></svg>
  <div class="abs" style="left:1061px;top:715px;font-size:22px;line-height:26px;font-weight:bold;color:rgba(80,100,140,.55);white-space:nowrap;letter-spacing:1.5px;-webkit-text-stroke:0">泛普软件</div>
  <div class="abs" style="left:1036px;top:737px;font-family:'Liberation Serif',serif;font-size:14.5px;line-height:16px;color:rgba(212,125,95,.72);white-space:nowrap;letter-spacing:0.1px;-webkit-text-stroke:0.3px rgba(212,125,95,.6)">www.fanpusoft.com</div>
</div>
</body></html>
